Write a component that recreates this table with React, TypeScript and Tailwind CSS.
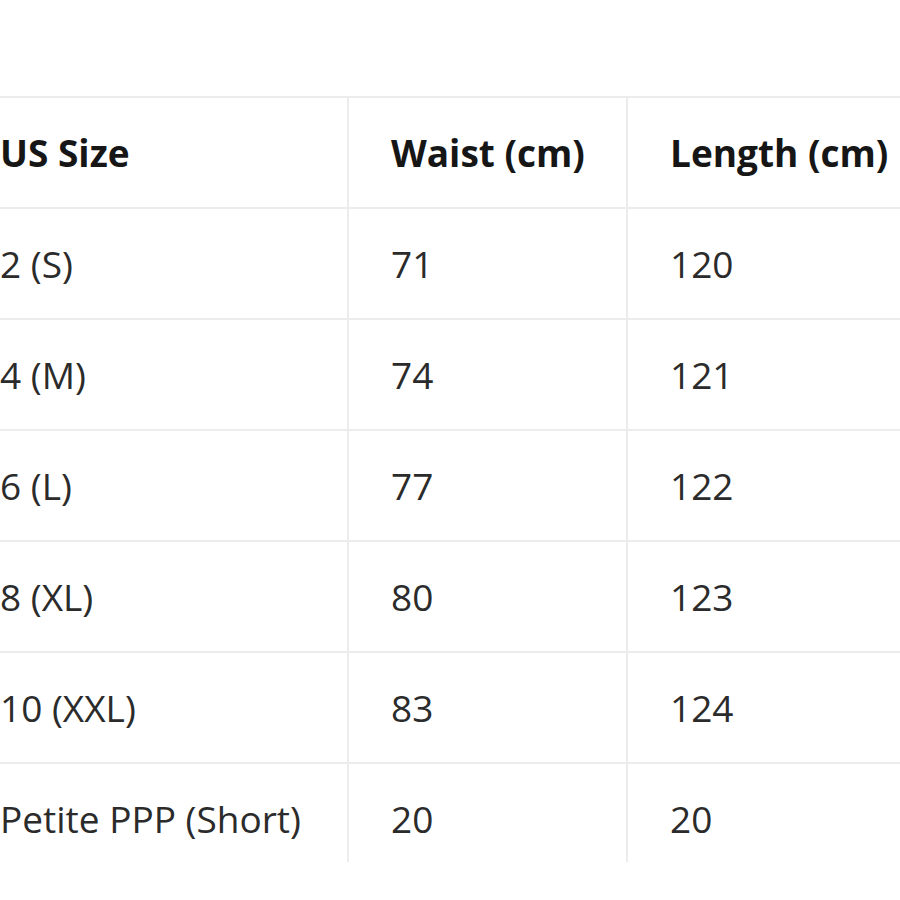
// Size chart table, cropped at the left and right like the reference

const rows = [
  { size: "2 (S)", waist: "71", length: "120" },
  { size: "4 (M)", waist: "74", length: "121" },
  { size: "6 (L)", waist: "77", length: "122" },
  { size: "8 (XL)", waist: "80", length: "123" },
  { size: "10 (XXL)", waist: "83", length: "124" },
  { size: "Petite PPP (Short)", waist: "20", length: "20" },
]

export default function App() {
  return (
    <div
      className="w-[900px] h-[900px] overflow-hidden bg-white pt-[96px]"
      style={{ fontFamily: '"Open Sans", "Noto Sans", sans-serif' }}
    >
      {/* the last row is cut off by the frame */}
      <div className="h-[766px] overflow-hidden">
        <table className="ml-[-42px] border-collapse table-fixed w-[1000px] text-[37px]">
          <colgroup>
            <col className="w-[390px]" />
            <col className="w-[279px]" />
            <col className="w-[331px]" />
          </colgroup>
          <thead>
            <tr className="h-[111px] border-t-2 border-[#ececec]">
              <th className="pl-[42px] text-left align-middle font-bold text-[#161616] border-r-2 border-[#ececec]">
                US Size
              </th>
              <th className="pl-[42px] text-left align-middle font-bold text-[#161616] border-r-2 border-[#ececec]">
                Waist (cm)
              </th>
              <th className="pl-[42px] text-left align-middle font-bold text-[#161616]">
                Length (cm)
              </th>
            </tr>
          </thead>
          <tbody>
            {rows.map((r) => (
              <tr key={r.size} className="h-[111px] border-t-2 border-[#ececec]">
                <td className="pl-[42px] align-middle text-[#2b2b2b] border-r-2 border-[#ececec]">
                  {r.size}
                </td>
                <td className="pl-[42px] align-middle text-[#2b2b2b] border-r-2 border-[#ececec]">
                  {r.waist}
                </td>
                <td className="pl-[42px] align-middle text-[#2b2b2b]">{r.length}</td>
              </tr>
            ))}
          </tbody>
        </table>
      </div>
    </div>
  )
}
